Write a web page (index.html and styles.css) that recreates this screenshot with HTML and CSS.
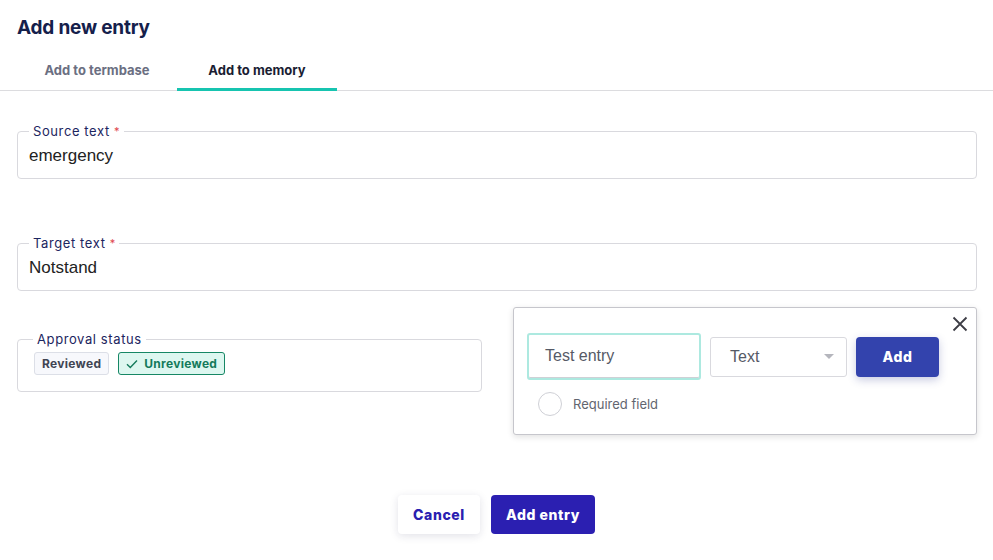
FILE: index.html
```html
<!DOCTYPE html>
<html lang="en">
<head>
  <meta charset="UTF-8" />
  <title>Add new entry</title>
  <link rel="stylesheet" href="styles.css">
</head>
<body>
  <div class="modal">
    <h1>Add new entry</h1>

    <div class="tabs">
      <button class="tab">Add to termbase</button>
      <button class="tab active">Add to memory</button>
    </div>

    <div class="form">
      <fieldset class="field source">
        <legend>Source text <span class="req">*</span></legend>
        <div class="value">emergency</div>
      </fieldset>

      <fieldset class="field target">
        <legend>Target text <span class="req">*</span></legend>
        <div class="value">Notstand</div>
      </fieldset>

      <fieldset class="field status">
        <legend>Approval status</legend>
        <div class="chips">
          <span class="chip">Reviewed</span>
          <span class="chip selected">
            <svg width="12" height="10" viewBox="0 0 12 10"><path d="M1 5.2 L4.3 8.4 L11 1.6" fill="none" stroke="currentColor" stroke-width="1.4"/></svg>
            Unreviewed
          </span>
        </div>
      </fieldset>

      <div class="popover">
        <button class="close" aria-label="Close">
          <svg width="16" height="16" viewBox="0 0 16 16"><path d="M1.5 1.5 L14.5 14.5 M14.5 1.5 L1.5 14.5" stroke="#3d3d45" stroke-width="1.8" fill="none"/></svg>
        </button>
        <div class="pop-row">
          <div class="pop-input">Test entry</div>
          <div class="pop-select">
            <span>Text</span>
            <span class="caret"></span>
          </div>
          <button class="pop-add">Add</button>
        </div>
        <label class="radio-row">
          <span class="radio"></span>
          Required field
        </label>
      </div>
    </div>

    <div class="actions">
      <button class="btn btn-cancel">Cancel</button>
      <button class="btn btn-primary">Add entry</button>
    </div>
  </div>
</body>
</html>
```

FILE: styles.css
```css
body {
  margin: 0;
  background: #fff;
  font-family: Inter, "Noto Sans", sans-serif;
  color: #1b2350;
}

.modal {
  position: relative;
  height: 560px;
}

h1 {
  margin: 0;
  padding: 15px 17px 0;
  font-size: 19px;
  font-weight: 700;
  line-height: 26px;
  color: #15204b;
  letter-spacing: -0.2px;
}

.tabs {
  display: flex;
  padding-left: 17px;
  margin-top: 15px;
  border-bottom: 1px solid #dcdcdf;
}

.tab {
  width: 160px;
  height: 35px;
  border: 0;
  border-bottom: 3px solid transparent;
  margin-bottom: -1px;
  background: none;
  font-family: Inter, "Noto Sans", sans-serif;
  font-size: 13px;
  font-weight: 700;
  color: #6b6f82;
  padding: 0 0 4px;
  cursor: pointer;
}

.tab.active {
  color: #1a1d33;
  border-bottom-color: #17c4b0;
}

.form {
  position: relative;
  padding: 0 16px 0 17px;
}

.field {
  margin: 0;
  border: 1px solid #d9d9de;
  border-radius: 4px;
  padding: 0 11px 7px;
}

.field legend {
  padding: 0 4px;
  font-size: 13px;
  line-height: 16px;
  letter-spacing: 0.6px;
  color: #1c2560;
}

.req {
  color: #e0464e;
  font-size: 11px;
  vertical-align: top;
  letter-spacing: 0;
}

.source {
  margin-top: 32px;
}

.target {
  margin-top: 56px;
}

.value {
  height: 32px;
  line-height: 33px;
  font-family: "Liberation Sans", Arial, sans-serif;
  font-size: 17px;
  color: #222;
}

.status {
  width: 437px;
  margin-top: 40px;
  padding: 0 11px 16px 15px;
}

.chips {
  display: flex;
  gap: 9px;
  margin-top: 5px;
  margin-left: 1px;
}

.chip {
  display: inline-flex;
  align-items: center;
  gap: 6px;
  height: 21px;
  padding: 0 7px;
  border: 1px solid #dcdfe7;
  border-radius: 3px;
  background: #f7f8fc;
  font-size: 12px;
  font-weight: 700;
  letter-spacing: 0.3px;
  color: #404452;
}

.chip.selected {
  background: #ddf7f0;
  border-color: #168765;
  color: #147a5b;
}

.popover {
  position: absolute;
  left: 513px;
  top: 184px;
  width: 462px;
  height: 126px;
  border: 1px solid #c6c6cc;
  border-radius: 3px;
  background: #fff;
  box-shadow: 0 2px 6px rgba(0, 0, 0, 0.12);
}

.close {
  position: absolute;
  right: 8px;
  top: 8px;
  border: 0;
  background: none;
  padding: 0;
  width: 16px;
  height: 16px;
}

.pop-row {
  display: flex;
  align-items: center;
  gap: 9px;
  margin: 25px 0 0 13px;
}

.pop-input {
  box-sizing: border-box;
  width: 174px;
  height: 47px;
  border: 2px solid #ade9e0;
  border-radius: 3px;
  box-shadow: inset 0 -1px 0 #cfd0d6;
  padding-left: 16px;
  line-height: 41px;
  font-family: "Liberation Sans", Arial, sans-serif;
  font-size: 16px;
  color: #565a66;
}

.pop-select {
  box-sizing: border-box;
  width: 137px;
  height: 40px;
  border: 1px solid #d9d9de;
  border-radius: 3px;
  display: flex;
  align-items: center;
  justify-content: space-between;
  padding: 0 12px 0 19px;
  font-family: "Liberation Sans", Arial, sans-serif;
  font-size: 16px;
  color: #565a66;
}

.caret {
  width: 0;
  height: 0;
  border-left: 5px solid transparent;
  border-right: 5px solid transparent;
  border-top: 5px solid #b5b6bd;
}

.pop-add {
  width: 83px;
  height: 40px;
  border: 0;
  border-radius: 4px;
  background: #3343ad;
  color: #fff;
  font-family: Inter, "Noto Sans", sans-serif;
  font-size: 14px;
  font-weight: 800;
  letter-spacing: 0.6px;
  box-shadow: 0 3px 8px rgba(40, 50, 140, 0.25);
}

.radio-row {
  display: flex;
  align-items: center;
  gap: 11px;
  margin: 12px 0 0 24px;
  font-size: 13px;
  color: #62656f;
}

.radio {
  width: 22px;
  height: 22px;
  border: 1px solid #cfd0d6;
  border-radius: 50%;
}

.actions {
  display: flex;
  justify-content: center;
  gap: 11px;
  margin-top: 103px;
}

.btn {
  height: 39px;
  border: 0;
  border-radius: 4px;
  font-family: Inter, "Noto Sans", sans-serif;
  font-size: 14px;
  font-weight: 800;
  letter-spacing: 0.6px;
  cursor: pointer;
}

.btn-cancel {
  width: 82px;
  background: #fff;
  color: #2a20b0;
  box-shadow: 0 2px 8px rgba(30, 30, 80, 0.13);
}

.btn-primary {
  width: 104px;
  background: #2b1fb1;
  color: #fff;
}
```
